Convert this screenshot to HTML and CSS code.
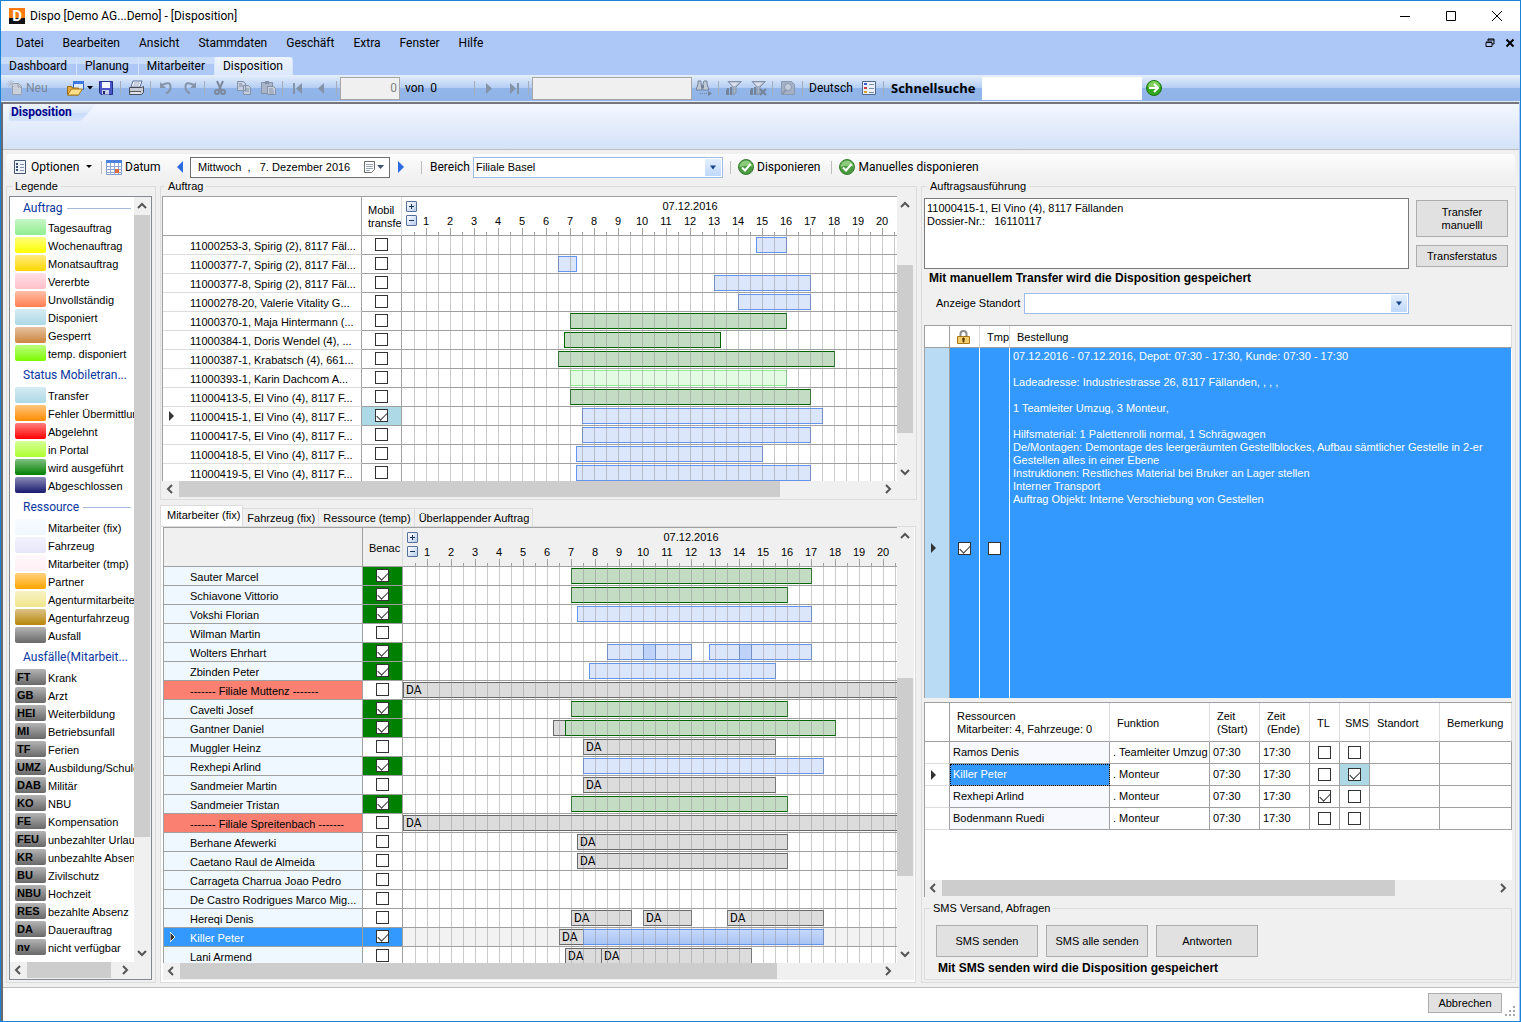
FILE: index.html
```html
<!DOCTYPE html>
<html lang="de">

<head>
    <meta charset="UTF-8">
    <meta name="viewport" content="width=device-width, initial-scale=1.0">
    <title>Dispo [Demo AG...Demo] - [Disposition]</title>
    <link rel="stylesheet" href="styles.css">
</head>

<body>
    <svg class="sprite" aria-hidden="true">
        <symbol id="arrow-up" viewBox="0 0 16 16"><path d="M4 10l4-4 4 4" fill="none" stroke="#555" stroke-width="2" /></symbol>
        <symbol id="arrow-down" viewBox="0 0 16 16"><path d="M4 6l4 4 4-4" fill="none" stroke="#555" stroke-width="2" /></symbol>
        <symbol id="arrow-left" viewBox="0 0 16 16"><path d="M10 4L6 8l4 4" fill="none" stroke="#555" stroke-width="2" /></symbol>
        <symbol id="arrow-right" viewBox="0 0 16 16"><path d="M6 4l4 4-4 4" fill="none" stroke="#555" stroke-width="2" /></symbol>
        <symbol id="ok" viewBox="0 0 16 16">
            <circle cx="8" cy="8" r="7.5" fill="#4a9c3f" stroke="#3a7d33" />
            <path d="M1.500 8a6.500 6.500 0 0 1 13 0c-4-2-9-1-13 0z" fill="#8ccb7c" />
            <path d="M4 8.500l3 3 5.500-6.500" fill="none" stroke="#fff" stroke-width="2" />
        </symbol>
        <symbol id="marker" viewBox="0 0 6 10"><path d="M0 0l5 5-5 5z" fill="#333" /></symbol>
        <symbol id="combo" viewBox="0 0 16 16"><path d="M5 6h6L8 10z" fill="#15428b" /></symbol>
    </svg>

    <div class="window">
        <header class="titlebar">
            <span class="logo">D</span>
            <h1>Dispo [Demo AG...Demo] - [Disposition]</h1>
            <div class="window-buttons">
                <button type="button" aria-label="Minimieren"><svg width="12" height="12"><path d="M1 6.500h10" stroke="#000" /></svg></button>
                <button type="button" aria-label="Maximieren"><svg width="12" height="12"><path d="M1.500 1.500h9v9h-9z" fill="none" stroke="#000" /></svg></button>
                <button type="button" aria-label="Schliessen"><svg width="12" height="12"><path d="M1 1l10 10M11 1L1 11" stroke="#000" /></svg></button>
            </div>
        </header>

        <nav class="menubar">
            <a href="#">Datei</a>
            <a href="#">Bearbeiten</a>
            <a href="#">Ansicht</a>
            <a href="#">Stammdaten</a>
            <a href="#">Geschäft</a>
            <a href="#">Extra</a>
            <a href="#">Fenster</a>
            <a href="#">Hilfe</a>
            <div class="mdi-buttons">
                <button type="button" aria-label="Wiederherstellen"><svg width="10" height="10"><path d="M3 3V1h6v5H7M3 2h6M1 4.500h6v4H1zM1 4h6" fill="none" stroke="#000" /></svg></button>
                <button type="button" aria-label="Fenster schliessen"><svg width="10" height="10"><path d="M1.500 1.500l7 7M8.500 1.500l-7 7" stroke="#000" stroke-width="2" /></svg></button>
            </div>
        </nav>

        <nav class="module-tabs">
            <a href="#">Dashboard</a>
            <a href="#">Planung</a>
            <a href="#">Mitarbeiter</a>
            <a href="#" class="active">Disposition</a>
        </nav>

        <div class="toolbar">
            <button type="button" class="tool-new" disabled>
                <svg width="16" height="16"><path d="M5.500 3.500h6l3 3v8h-9z" fill="#c9d0da" stroke="#97a1b0" /><path d="M11 3v4h4" fill="none" stroke="#97a1b0" /><path d="M4 0v8M0 4h8M1 1l6 6M7 1L1 7" stroke="#b4bdca" /></svg>
                Neu
            </button>
            <button type="button" class="tool-open" aria-label="Öffnen">
                <svg width="17" height="16"><path d="M6.500 1.500h10v8h-10z" fill="#dfeaff" stroke="#2b5fc4" /><path d="M6 1h11v3H6z" fill="#3f78e0" /><path d="M.500 15V6.500h4l1 1.500h6v7z" fill="#e3a93c" stroke="#9a6a14" /><path d="M.500 15l4-6h11l-4 6z" fill="#ffdf87" stroke="#a87a1c" /></svg>
                <svg width="7" height="4"><path d="M1 0h6L4 3.500z" /></svg>
            </button>
            <button type="button" class="tool" aria-label="Speichern">
                <svg width="16" height="16"><path d="M1.500 1.500h13v13H3l-1.500-2z" fill="#4a55c8" stroke="#252c86" /><path d="M4 2h8v6H4z" fill="#f4f6ff" /><path d="M4 10h7v4.500H4z" fill="#c9cfe8" /><path d="M5 11h2v3H5z" fill="#20266e" /></svg>
            </button>
            <span class="sep"></span>
            <button type="button" class="tool" aria-label="Drucken">
                <svg width="16" height="16"><path d="M5 1h9l-2 6H3z" fill="#fff" stroke="#5a6f96" /><path d="M6 3h6M5 5h6" stroke="#8fa3c4" /><path d="M1.500 7.500h12l2-1v6l-2 2h-12z" fill="#c6cbd4" stroke="#4a4f5b" /><path d="M2 11.500h11" stroke="#555" /><path d="M3 13h9" stroke="#fff" /></svg>
            </button>
            <span class="sep"></span>
            <button type="button" class="tool" aria-label="Rückgängig" disabled>
                <svg width="16" height="16"><path d="M4 5q8-4 8.500 1T8 13.500" fill="none" stroke="#8795ab" stroke-width="2" /><path d="M2 2v6h6z" fill="#8795ab" /></svg>
            </button>
            <button type="button" class="tool" aria-label="Wiederholen" disabled>
                <svg width="16" height="16"><path d="M12 5Q4 1 3.500 6T8 13.500" fill="none" stroke="#8795ab" stroke-width="2" /><path d="M14 2v6H8z" fill="#8795ab" /></svg>
            </button>
            <span class="sep"></span>
            <button type="button" class="tool" aria-label="Ausschneiden" disabled>
                <svg width="16" height="16"><path d="M5 1l4 9M11 1l-4 9" stroke="#7c899d" stroke-width="2" /><circle cx="5" cy="12" r="2" fill="none" stroke="#7c899d" stroke-width="2" /><circle cx="11" cy="12" r="2" fill="none" stroke="#7c899d" stroke-width="2" /></svg>
            </button>
            <button type="button" class="tool" aria-label="Kopieren" disabled>
                <svg width="16" height="16"><path d="M1.500 1.500h6l2 2v7h-8zM7.500 5.500h5l2 2v7h-7z" fill="#c5cede" stroke="#8491a6" /><path d="M3 4h3M3 6h4M9 9h4M9 11h4" stroke="#8491a6" /></svg>
            </button>
            <button type="button" class="tool" aria-label="Einfügen" disabled>
                <svg width="16" height="16"><path d="M1.500 2.500h11v11h-11z" fill="#a9b5c8" stroke="#8491a6" /><path d="M5 1h4v3H5z" fill="#8491a6" /><path d="M7.500 6.500h6l2 2v6h-8z" fill="#c9d2e0" stroke="#8491a6" /><path d="M9 9h4M9 11h5M9 13h5" stroke="#8491a6" /></svg>
            </button>
            <span class="sep"></span>
            <button type="button" class="tool" aria-label="Erster Datensatz" disabled>
                <svg width="14" height="14"><path d="M2 2h2v11H2zM11 2v11L5 7.500z" fill="#8593a8" /></svg>
            </button>
            <button type="button" class="tool" aria-label="Vorheriger Datensatz" disabled>
                <svg width="14" height="14"><path d="M9 2v11L3 7.500z" fill="#8593a8" /></svg>
            </button>
            <span class="sep"></span>
            <input type="text" class="record-input" value="0" aria-label="Datensatz" disabled>
            <span class="record-count">von&nbsp; 0</span>
            <span class="sep"></span>
            <button type="button" class="tool" aria-label="Nächster Datensatz" disabled>
                <svg width="14" height="14"><path d="M3 2v11l6-5.500z" fill="#8593a8" /></svg>
            </button>
            <button type="button" class="tool" aria-label="Letzter Datensatz" disabled>
                <svg width="14" height="14"><path d="M10 2h2v11h-2zM3 2v11l6-5.500z" fill="#8593a8" /></svg>
            </button>
            <span class="sep"></span>
            <input type="text" class="find-input" aria-label="Suchbegriff" disabled>
            <button type="button" class="tool" aria-label="Suchen" disabled>
                <svg width="16" height="16"><path d="M2 1h3v3l1 6H0l2-6zM8 1h3v3l2 6H7V4z" fill="#bfc9d8" stroke="#75839a" /><path d="M5 5h3v3H5z" fill="#75839a" /><path d="M4 13.500h8" stroke="#75839a" stroke-dasharray="1 1" /><path d="M12 11v5l4-2.500z" fill="#75839a" /></svg>
            </button>
            <span class="sep"></span>
            <button type="button" class="tool" aria-label="Filter" disabled>
                <svg width="16" height="16"><path d="M2 1.500h13.500L10 7v6l-3 2V7z" fill="#a9b4c6" stroke="#8491a6" /><path d="M4 2.500h9L9 6H7z" fill="#d9e0ea" /><path d="M1 8h2v7H0v-4zM4 7h2v8H4z" fill="#75839a" /></svg>
            </button>
            <button type="button" class="tool" aria-label="Filter löschen" disabled>
                <svg width="17" height="16"><path d="M2 1.500h13.500L10 7v6l-3 2V7z" fill="#a9b4c6" stroke="#8491a6" /><path d="M4 2.500h9L9 6H7z" fill="#d9e0ea" /><path d="M1 8h2v7H0v-4zM4 7h2v8H4z" fill="#75839a" /><path d="M10 9l6 6M16 9l-6 6" stroke="#75839a" stroke-width="2" /></svg>
            </button>
            <span class="sep"></span>
            <button type="button" class="tool" aria-label="Vorschau" disabled>
                <svg width="16" height="16"><path d="M1.500 1.500h10l3 3v10h-13z" fill="#a3b0c5" stroke="#8c99ae" /><circle cx="8" cy="7" r="3.500" fill="#c3cedd" stroke="#8c99ae" /><path d="M6 10l-4 4" stroke="#8c99ae" stroke-width="2" /></svg>
            </button>
            <span class="sep"></span>
            <button type="button" class="tool-language">Deutsch</button>
            <button type="button" class="tool" aria-label="Liste">
                <svg width="16" height="16"><path d="M1.500 1.500h13v13h-13z" fill="#eaf1fc" stroke="#53678c" /><path d="M3 3h3v2H3z" fill="#3f5bd0" /><path d="M3 7h3v2H3z" fill="#d03f3f" /><path d="M3 11h3v2H3z" fill="#d9a32b" /><path d="M8 4.500h5M8 8.500h5M8 12.500h5" stroke="#7d8ca8" /></svg>
            </button>
            <span class="sep"></span>
            <label class="quick-label" for="quick">Schnellsuche</label>
            <input type="text" id="quick" class="quick-input">
            <button type="button" class="tool" aria-label="Schnellsuche starten">
                <svg width="16" height="16"><circle cx="8" cy="8" r="7.500" fill="#35a81f" stroke="#1c7412" /><path d="M2 7a6 6 0 0 1 12 0z" fill="#7fcf5c" /><path d="M3 8h8M8 4l4 4-4 4" fill="none" stroke="#fff" stroke-width="2" /></svg>
            </button>
        </div>

        <div class="client">
            <div class="band">
                <h2>Disposition</h2>
                <svg width="16" height="17" viewBox="0 0 16 17"><defs><linearGradient id="corner" x1="0" y1="0" x2="0" y2="1"><stop offset="0" stop-color="#eef4fe" /><stop offset="0.500" stop-color="#d9e6fb" /><stop offset="0.500" stop-color="#c9dcfa" /><stop offset="1" stop-color="#d5e4fc" /></linearGradient></defs><path d="M0 0h16L2 16l-2 1z" fill="url(#corner)" /></svg>
            </div>

            <div class="options-bar">
                <button type="button" class="opt-options">
                    <svg width="12" height="14"><path d="M.500.500h11v13H.500z" fill="#eef2fa" stroke="#46546f" /><path d="M2 3h2v2H2zM2 6h2v2H2zM2 9h2v2H2z" fill="#3e4f74" /><path d="M6 4.500h4M6 7.500h4M6 10.500h4" stroke="#8592ab" /></svg>
                    <span>Optionen</span>
                    <svg width="7" height="4"><path d="M0 0h6L3 3z" /></svg>
                </button>
                <span class="sep-gray"></span>
                <button type="button" class="opt-date">
                    <svg width="16" height="16"><path d="M.500 2.500h15v13H.500z" fill="#fff" stroke="#7d9bd0" /><path d="M0 1h16v3H0z" fill="#4b82dc" /><path d="M0 7.500h16M0 10.500h16M0 13.500h16M4.500 4v12M8.500 4v12M12.500 4v12" stroke="#8fa8d6" /><path d="M9 10h4v4H9z" fill="#e06a3a" /></svg>
                    Datum
                </button>
                <button type="button" class="step" aria-label="Vorheriger Tag"><svg width="7" height="12"><path d="M6 0v12L0 6z" fill="#2f6be0" /></svg></button>
                <div class="date-box">
                    <input type="text" value="Mittwoch  ,   7. Dezember 2016" aria-label="Datum">
                    <svg width="22" height="14"><path d="M1.500 1.500h10v8l-3 3h-7z" fill="#fff" stroke="#6b6b6b" /><path d="M3 4.500h7M3 6.500h7M3 8.500h7M3 10.500h4" stroke="#9aa5b8" /><path d="M14 5h7l-3.500 4z" fill="#44546f" /></svg>
                </div>
                <button type="button" class="step" aria-label="Nächster Tag"><svg width="7" height="12"><path d="M1 0v12l6-6z" fill="#2f6be0" /></svg></button>
                <span class="sep-gray"></span>
                <label for="bereich" class="bereich-label">Bereich</label>
                <div class="combo combo-bereich">
                    <select id="bereich">
                        <option>Filiale Basel</option>
                    </select>
                    <svg width="16" height="16"><use href="#combo" /></svg>
                </div>
                <span class="sep-gray"></span>
                <button type="button" class="opt-action"><svg width="16" height="16"><use href="#ok" /></svg>Disponieren</button>
                <span class="sep-gray"></span>
                <button type="button" class="opt-action"><svg width="16" height="16"><use href="#ok" /></svg>Manuelles disponieren</button>
            </div>

            <main class="columns">
                <fieldset class="group">
                    <legend>Legende</legend>
                    <div class="legend-box">
                        <div class="legend-list">
                            <h3>Auftrag</h3>
                            <ul>
                                <li><i class="lightgreen"></i>Tagesauftrag</li>
                                <li><i class="yellow"></i>Wochenauftrag</li>
                                <li><i class="gold"></i>Monatsauftrag</li>
                                <li><i class="pink"></i>Vererbte</li>
                                <li><i class="coral"></i>Unvollständig</li>
                                <li><i class="lightblue"></i>Disponiert</li>
                                <li><i class="peru"></i>Gesperrt</li>
                                <li><i class="lawngreen"></i>temp. disponiert</li>
                            </ul>
                            <h3>Status Mobiletran...</h3>
                            <ul>
                                <li><i class="lightblue"></i>Transfer</li>
                                <li><i class="darkorange"></i>Fehler Übermittlun</li>
                                <li><i class="red"></i>Abgelehnt</li>
                                <li><i class="greenyellow"></i>in Portal</li>
                                <li><i class="green"></i>wird ausgeführt</li>
                                <li><i class="midnight"></i>Abgeschlossen</li>
                            </ul>
                            <h3>Ressource</h3>
                            <ul>
                                <li><i class="aliceblue"></i>Mitarbeiter (fix)</li>
                                <li><i class="lavender"></i>Fahrzeug</li>
                                <li><i class="blush"></i>Mitarbeiter (tmp)</li>
                                <li><i class="orange"></i>Partner</li>
                                <li><i class="khaki"></i>Agenturmitarbeiter</li>
                                <li><i class="goldenrod"></i>Agenturfahrzeug</li>
                                <li><i class="gray"></i>Ausfall</li>
                            </ul>
                            <h3>Ausfälle(Mitarbeit...</h3>
                            <ul>
                                <li><i class="gray">FT</i>Krank</li>
                                <li><i class="gray">GB</i>Arzt</li>
                                <li><i class="gray">HEI</i>Weiterbildung</li>
                                <li><i class="gray">MI</i>Betriebsunfall</li>
                                <li><i class="gray">TF</i>Ferien</li>
                                <li><i class="gray">UMZ</i>Ausbildung/Schule</li>
                                <li><i class="gray">DAB</i>Militär</li>
                                <li><i class="gray">KO</i>NBU</li>
                                <li><i class="gray">FE</i>Kompensation</li>
                                <li><i class="gray">FEU</i>unbezahlter Urlaub</li>
                                <li><i class="gray">KR</i>unbezahlte Absen</li>
                                <li><i class="gray">BU</i>Zivilschutz</li>
                                <li><i class="gray">NBU</i>Hochzeit</li>
                                <li><i class="gray">RES</i>bezahlte Absenz</li>
                                <li><i class="gray">DA</i>Dauerauftrag</li>
                                <li><i class="gray">nv</i>nicht verfügbar</li>
                            </ul>
                        </div>
                        <div class="scroll-v">
                            <button type="button" aria-label="Nach oben"><svg><use href="#arrow-up" /></svg></button>
                            <div class="track" style="grid-template-rows: 0fr 625fr 107fr"><span class="thumb"></span></div>
                            <button type="button" aria-label="Nach unten"><svg><use href="#arrow-down" /></svg></button>
                        </div>
                        <div class="scroll-h">
                            <button type="button" aria-label="Nach links"><svg><use href="#arrow-left" /></svg></button>
                            <div class="track" style="grid-template-columns: 0fr 83fr 6fr"><span class="thumb"></span></div>
                            <button type="button" aria-label="Nach rechts"><svg><use href="#arrow-right" /></svg></button>
                        </div>
                    </div>
                </fieldset>

                <div class="planning">
                    <fieldset class="group orders">
                        <legend>Auftrag</legend>
                        <div class="gantt">
                            <div class="gantt-view">
                                <table>
                                    <colgroup><col class="col-name"><col class="col-check"><col></colgroup>
                                    <thead>
                                        <tr>
                                            <th></th>
                                            <th>Mobil<br>transfe</th>
                                            <th class="scale"></th>
                                        </tr>
                                    </thead>
                                    <tbody id="orderRows"></tbody>
                                </table>
                            </div>
                            <div class="scroll-v">
                                <button type="button" aria-label="Nach oben"><svg><use href="#arrow-up" /></svg></button>
                                <div class="track" style="grid-template-rows: 51fr 169fr 30fr"><span class="thumb"></span></div>
                                <button type="button" aria-label="Nach unten"><svg><use href="#arrow-down" /></svg></button>
                            </div>
                            <div class="scroll-h">
                                <button type="button" aria-label="Nach links"><svg><use href="#arrow-left" /></svg></button>
                                <div class="track" style="grid-template-columns: 0fr 601fr 100fr"><span class="thumb"></span></div>
                                <button type="button" aria-label="Nach rechts"><svg><use href="#arrow-right" /></svg></button>
                            </div>
                        </div>
                    </fieldset>

                    <nav class="resource-tabs">
                        <a href="#" class="active">Mitarbeiter (fix)</a>
                        <a href="#">Fahrzeug (fix)</a>
                        <a href="#">Ressource (temp)</a>
                        <a href="#">Überlappender Auftrag</a>
                    </nav>
                    <div class="resources">
                        <div class="gantt">
                            <div class="gantt-view">
                                <table>
                                    <colgroup><col class="col-name"><col class="col-check"><col></colgroup>
                                    <thead>
                                        <tr>
                                            <th></th>
                                            <th>Benac</th>
                                            <th class="scale"></th>
                                        </tr>
                                    </thead>
                                    <tbody id="staffRows"></tbody>
                                </table>
                            </div>
                            <div class="scroll-v">
                                <button type="button" aria-label="Nach oben"><svg><use href="#arrow-up" /></svg></button>
                                <div class="track" style="grid-template-rows: 134fr 199fr 69fr"><span class="thumb"></span></div>
                                <button type="button" aria-label="Nach unten"><svg><use href="#arrow-down" /></svg></button>
                            </div>
                            <div class="scroll-h">
                                <button type="button" aria-label="Nach links"><svg><use href="#arrow-left" /></svg></button>
                                <div class="track" style="grid-template-columns: 0fr 597fr 103fr"><span class="thumb"></span></div>
                                <button type="button" aria-label="Nach rechts"><svg><use href="#arrow-right" /></svg></button>
                            </div>
                        </div>
                    </div>
                </div>

                <fieldset class="group execution">
                    <legend>Auftragsausführung</legend>
                    <div class="transfer">
                        <textarea aria-label="Auftrag">11000415-1, El Vino (4), 8117 Fällanden
Dossier-Nr.:   16110117</textarea>
                        <div class="transfer-buttons">
                            <button type="button" class="btn">Transfer<br>manuelll</button>
                            <button type="button" class="btn">Transferstatus</button>
                        </div>
                    </div>
                    <p class="note">Mit manuellem Transfer wird die Disposition gespeichert</p>
                    <div class="location">
                        <label for="standort">Anzeige Standort</label>
                        <div class="combo combo-standort">
                            <select id="standort">
                                <option></option>
                            </select>
                            <svg width="16" height="16"><use href="#combo" /></svg>
                        </div>
                    </div>

                    <div class="order-view">
                        <table>
                            <colgroup><col class="w-head"><col class="w-check"><col class="w-check"><col></colgroup>
                            <thead>
                                <tr>
                                    <th></th>
                                    <th><svg width="13" height="14"><path d="M3.500 7V4a3 3 0 0 1 6 0v3" fill="none" stroke="#8c8c8c" stroke-width="2" /><path d="M.500 6.500h12v7H.500z" fill="#f3cd6b" stroke="#a8761a" /><path d="M6 8h1v4H6zM5 9h3" fill="#5b3c05" stroke="#5b3c05" /></svg></th>
                                    <th>Tmp</th>
                                    <th>Bestellung</th>
                                </tr>
                            </thead>
                            <tbody>
                                <tr>
                                    <td><svg class="marker" width="6" height="10"><use href="#marker" /></svg></td>
                                    <td><input type="checkbox" aria-label="Gesperrt" checked></td>
                                    <td><input type="checkbox" aria-label="Tmp"></td>
                                    <td>07.12.2016 - 07.12.2016, Depot: 07:30 - 17:30, Kunde: 07:30 - 17:30<br><br>
                                        Ladeadresse: Industriestrasse 26, 8117 Fällanden, , , ,<br><br>
                                        1 Teamleiter Umzug, 3 Monteur,<br><br>
                                        Hilfsmaterial: 1 Palettenrolli normal, 1 Schrägwagen<br>
                                        De/Montagen: Demontage des leergeräumten Gestellblockes, Aufbau sämtlicher Gestelle in 2-er Gestellen alles in einer Ebene<br>
                                        Instruktionen: Restliches Material bei Bruker an Lager stellen<br>
                                        Interner Transport<br>
                                        Auftrag Objekt: Interne Verschiebung von Gestellen</td>
                                </tr>
                            </tbody>
                        </table>
                    </div>

                    <div class="assigned-view">
                        <table>
                            <colgroup><col class="w-head"><col class="w-name"><col class="w-function"><col class="w-time"><col class="w-time"><col class="w-check"><col class="w-check"><col class="w-place"><col></colgroup>
                            <thead>
                                <tr>
                                    <th></th>
                                    <th>Ressourcen<br>Mitarbeiter: 4, Fahrzeuge: 0</th>
                                    <th>Funktion</th>
                                    <th>Zeit<br>(Start)</th>
                                    <th>Zeit<br>(Ende)</th>
                                    <th>TL</th>
                                    <th>SMS</th>
                                    <th>Standort</th>
                                    <th>Bemerkung</th>
                                </tr>
                            </thead>
                            <tbody>
                                <tr>
                                    <td></td>
                                    <td>Ramos Denis</td>
                                    <td>. Teamleiter Umzug</td>
                                    <td>07:30</td>
                                    <td>17:30</td>
                                    <td><input type="checkbox" aria-label="TL Ramos Denis"></td>
                                    <td><input type="checkbox" aria-label="SMS Ramos Denis"></td>
                                    <td></td>
                                    <td></td>
                                </tr>
                                <tr class="selected">
                                    <td><svg class="marker" width="6" height="10"><use href="#marker" /></svg></td>
                                    <td>Killer Peter</td>
                                    <td>. Monteur</td>
                                    <td>07:30</td>
                                    <td>17:30</td>
                                    <td><input type="checkbox" aria-label="TL Killer Peter"></td>
                                    <td class="sent"><input type="checkbox" aria-label="SMS Killer Peter" checked></td>
                                    <td></td>
                                    <td></td>
                                </tr>
                                <tr>
                                    <td></td>
                                    <td>Rexhepi Arlind</td>
                                    <td>. Monteur</td>
                                    <td>07:30</td>
                                    <td>17:30</td>
                                    <td><input type="checkbox" aria-label="TL Rexhepi Arlind" checked></td>
                                    <td><input type="checkbox" aria-label="SMS Rexhepi Arlind"></td>
                                    <td></td>
                                    <td></td>
                                </tr>
                                <tr>
                                    <td></td>
                                    <td>Bodenmann Ruedi</td>
                                    <td>. Monteur</td>
                                    <td>07:30</td>
                                    <td>17:30</td>
                                    <td><input type="checkbox" aria-label="TL Bodenmann Ruedi"></td>
                                    <td><input type="checkbox" aria-label="SMS Bodenmann Ruedi"></td>
                                    <td></td>
                                    <td></td>
                                </tr>
                            </tbody>
                        </table>
                        <div class="scroll-h">
                            <button type="button" aria-label="Nach links"><svg><use href="#arrow-left" /></svg></button>
                            <div class="track" style="grid-template-columns: 0fr 454fr 100fr"><span class="thumb"></span></div>
                            <button type="button" aria-label="Nach rechts"><svg><use href="#arrow-right" /></svg></button>
                        </div>
                    </div>

                    <fieldset class="group sms">
                        <legend>SMS Versand, Abfragen</legend>
                        <div class="sms-buttons">
                            <button type="button" class="btn">SMS senden</button>
                            <button type="button" class="btn">SMS alle senden</button>
                            <button type="button" class="btn">Antworten</button>
                        </div>
                        <p class="note">Mit SMS senden wird die Disposition gespeichert</p>
                    </fieldset>
                </fieldset>
            </main>

            <footer class="footer">
                <button type="button" class="btn">Abbrechen</button>
                <svg width="11" height="11"><path d="M8 0h2v2H8zM8 4h2v2H8zM4 4h2v2H4zM8 8h2v2H8zM4 8h2v2H4zM0 8h2v2H0z" fill="#a8a8a8" /></svg>
            </footer>
        </div>
    </div>

    <script src="script.js"></script>
</body>

</html>
```

FILE: styles.css
```css
* {
    box-sizing: border-box;
}

body {
    margin: 0;
    font-family: "Liberation Sans", Arial, sans-serif;
    font-size: 11px;
    line-height: 13px;
    color: #000;
}

button,
input,
select,
textarea {
    font: inherit;
    color: inherit;
    margin: 0;
}

button {
    padding: 0;
    border: none;
    background: none;
    white-space: nowrap;
}

a {
    color: inherit;
    text-decoration: none;
}

h1,
h2,
h3,
p,
ul {
    margin: 0;
    padding: 0;
    font-weight: normal;
    font-size: inherit;
}

table {
    width: 100%;
    table-layout: fixed;
    border-collapse: separate;
    border-spacing: 0;
}

th {
    font-weight: normal;
    text-align: left;
}

svg {
    flex: none;
}

.sprite {
    position: absolute;
    width: 0;
    height: 0;
}

.window {
    display: flex;
    flex-direction: column;
    height: 100vh;
    border: 1px solid #1883d7;
    background-color: #adc8f7;
    overflow: hidden;
}

/* Title, menu, module tabs */
.titlebar,
.menubar,
.module-tabs,
.toolbar,
.options-bar {
    font-family: Roboto, "Noto Sans", sans-serif;
    font-size: 12px;
    line-height: 16px;
}

.titlebar {
    display: flex;
    align-items: center;
    flex: none;
    height: 30px;
    padding-left: 8px;
    gap: 5px;
    background-color: #fff;
}

.logo {
    width: 16px;
    height: 16px;
    background: linear-gradient(#f97b0c 60%, #111 60%);
    color: #fff;
    font-weight: bold;
    font-size: 15px;
    text-align: center;
}

.window-buttons {
    display: flex;
    margin-left: auto;
}

.window-buttons button {
    display: flex;
    justify-content: center;
    width: 46px;
}

.menubar {
    display: flex;
    align-items: center;
    flex: none;
    height: 26px;
    padding: 0 5px 2px 15px;
    gap: 19px;
}

.mdi-buttons {
    display: flex;
    gap: 10px;
    margin-left: auto;
}

.mdi-buttons button {
    display: flex;
}

.module-tabs {
    display: flex;
    flex: none;
    height: 18px;
    line-height: 18px;
}

.module-tabs a {
    padding: 0 9px 0 8px;
    border-right: 1px solid #d6e4fb;
    background: linear-gradient(#c9dcfa 40%, #adc8f7 40%);
}

.module-tabs a.active {
    border-radius: 0 3px 0 0;
    background: linear-gradient(#eef4fe, #dce8fc);
}

/* Main toolbar */
.toolbar {
    display: flex;
    align-items: center;
    flex: none;
    height: 27px;
    padding-left: 1px;
    border-bottom: 1px solid #e3ebf8;
    background: linear-gradient(#e6effc, #b4cdf3 50%, #93b6ea 50%, #90b3e8);
}

.tool {
    display: flex;
    align-items: center;
    justify-content: center;
    width: 24px;
    height: 22px;
}

.tool-new {
    display: flex;
    align-items: center;
    width: 62px;
    padding-left: 5px;
    gap: 3px;
    color: #7b8799;
}

.tool-open {
    display: flex;
    align-items: center;
    width: 30px;
    padding-left: 3px;
    gap: 2px;
}

.sep {
    flex: none;
    width: 6px;
    height: 14px;
    background: linear-gradient(#a4acba, #a4acba) 2px 0 / 1px 100% no-repeat;
}

.record-input,
.find-input {
    width: 60px;
    height: 23px;
    padding: 0 2px;
    border: 1px solid #a6a6a6;
    border-radius: 0;
    background-color: #f0f0f0;
    color: #838383;
    text-align: right;
}

.find-input {
    width: 160px;
}

.record-count {
    width: 72px;
    padding-left: 5px;
}

.tool-language {
    width: 51px;
    padding-left: 3px;
    text-align: left;
}

.quick-label {
    width: 95px;
    padding-left: 4px;
    font-family: "Open Sans", "Noto Sans", sans-serif;
    font-size: 13px;
    font-weight: bold;
}

.quick-input {
    width: 160px;
    height: 23px;
    border: none;
    background-color: #fff;
}

/* Client area */
.client {
    display: flex;
    flex-direction: column;
    flex: 1;
    min-height: 0;
    margin-right: 1px;
    border-left: 2px solid #6a6a72;
    border-top: 2px solid #75757d;
    background-color: #f0f0f0;
}

.band {
    display: flex;
    flex: none;
    height: 46px;
    padding-left: 6px;
    border-bottom: 1px solid #bdbdbd;
    background: linear-gradient(#f3f7ff, #d4e2f8);
}

.band h2 {
    width: 71px;
    height: 17px;
    padding-left: 2px;
    background: linear-gradient(#eef4fe, #d9e6fb 50%, #c9dcfa 50%, #d5e4fc);
    color: #00008b;
    font-family: Roboto, "Noto Sans", sans-serif;
    font-size: 12px;
    line-height: 17px;
    font-weight: bold;
}

.options-bar {
    display: flex;
    align-items: center;
    flex: none;
    height: 26px;
    margin: 4px 4px 0 3px;
    padding-left: 8px;
    border-radius: 4px;
    background: linear-gradient(#fdfdfd, #f0f0f0);
}

.options-bar button {
    display: flex;
    align-items: center;
}

.opt-options {
    width: 84px;
    gap: 5px;
}

.opt-options span {
    width: 50px;
    text-align: left;
}

.opt-date {
    width: 64px;
    gap: 3px;
}

.sep-gray {
    flex: none;
    width: 8px;
    height: 13px;
    background: linear-gradient(#bdbdbd, #bdbdbd) 3px 0 / 1px 100% no-repeat;
}

.options-bar .step {
    justify-content: center;
    width: 20px;
}

.date-box {
    display: flex;
    align-items: center;
    width: 200px;
    height: 21px;
    padding: 0 4px 0 7px;
    border: 1px solid #6e6e6e;
    background-color: #fff;
}

.date-box input {
    flex: 1;
    min-width: 0;
    padding: 0;
    border: none;
    font-family: "Liberation Sans", Arial, sans-serif;
    font-size: 11px;
    white-space: pre;
}

.bereich-label {
    width: 47px;
    padding-left: 4px;
}

.options-bar .step + .sep-gray {
    margin-left: 8px;
}

.combo {
    display: flex;
    position: relative;
    height: 21px;
    font-family: "Liberation Sans", Arial, sans-serif;
    font-size: 11px;
}

.combo select {
    flex: 1;
    min-width: 0;
    padding: 0 20px 0 2px;
    border: 1px solid #9dbde8;
    border-radius: 0;
    background-color: #fff;
    appearance: none;
}

.combo svg {
    position: absolute;
    top: 2px;
    right: 2px;
    height: 17px;
    background: linear-gradient(#e3eefe, #bfd9fb);
    pointer-events: none;
}

.combo-bereich {
    width: 250px;
    margin-right: 4px;
}

.options-bar .opt-action {
    gap: 3px;
    margin: 0 8px 0 3px;
}

/* Group boxes */
.columns {
    display: grid;
    grid-template-columns: 150px minmax(0, 1fr) 595px;
    gap: 4px;
    flex: 1;
    min-height: 0;
    padding: 0 3px 4px 3px;
}

.group {
    display: flex;
    flex-direction: column;
    min-width: 0;
    min-height: 0;
    margin: 0;
    padding: 3px 3px 2px 2px;
    border: 1px solid #dcdcdc;
}

.group > legend {
    margin-left: 3px;
    padding: 0 3px;
}

/* Scroll bars */
.scroll-v,
.scroll-h {
    display: flex;
    min-width: 0;
    min-height: 0;
    background-color: #f0f0f0;
}

.scroll-v {
    flex-direction: column;
    width: 17px;
    padding-right: 1px;
}

.scroll-h {
    height: 17px;
    padding-bottom: 1px;
}

.scroll-v button,
.scroll-h button {
    flex: none;
    width: 16px;
    height: 18px;
}

.scroll-h button {
    width: 17px;
    height: 16px;
}

.scroll-v button svg,
.scroll-h button svg {
    display: block;
    width: 16px;
    height: 16px;
}

.track {
    display: grid;
    flex: 1;
}

.scroll-v .thumb {
    grid-row: 2;
    background-color: #cdcdcd;
}

.scroll-h .thumb {
    grid-column: 2;
    background-color: #cdcdcd;
}

/* Legend */
.legend-box {
    display: grid;
    grid-template-columns: minmax(0, 1fr) 17px;
    grid-template-rows: minmax(0, 1fr) 17px;
    flex: 1;
    min-height: 0;
    border: 1px solid #828790;
    background-color: #fff;
}

.legend-box .scroll-h {
    grid-column: 1 / 3;
    padding-right: 17px;
}

.legend-list {
    padding-left: 5px;
    overflow: hidden;
}

.legend-list h3 {
    display: flex;
    align-items: center;
    gap: 4px;
    height: 24px;
    padding: 0 3px 0 8px;
    color: #0a36a0;
    font-family: Roboto, "Noto Sans", sans-serif;
    font-size: 12px;
    line-height: 16px;
    white-space: nowrap;
}

.legend-list h3:first-child {
    height: 22px;
}

.legend-list h3::after {
    content: "";
    flex: 1;
    height: 1px;
    background-color: #a9b9dd;
}

.legend-list ul {
    list-style: none;
}

.legend-list li {
    display: flex;
    height: 18px;
    gap: 2px;
    line-height: 18px;
    white-space: nowrap;
}

.legend-list i {
    flex: none;
    width: 31px;
    height: 16px;
    padding-left: 2px;
    border-radius: 2px;
    background-image: linear-gradient(rgba(255, 255, 255, 0.5), rgba(255, 255, 255, 0));
    font-style: normal;
    font-weight: bold;
    line-height: 16px;
}

.lightgreen { background-color: #90ee90; }
.yellow { background-color: #ffff00; }
.gold { background-color: #ffd700; }
.pink { background-color: #ffc0cb; }
.coral { background-color: #ff7f50; }
.lightblue { background-color: #add8e6; }
.peru { background-color: #cd853f; }
.lawngreen { background-color: #7cfc00; }
.darkorange { background-color: #ff8c00; }
.red { background-color: #ff0000; }
.greenyellow { background-color: #adff2f; }
.green { background-color: #008000; }
.midnight { background-color: #191970; }
.aliceblue { background-color: #f0f8ff; }
.lavender { background-color: #e6e6fa; }
.blush { background-color: #fff0f5; }
.orange { background-color: #ffa500; }
.khaki { background-color: #f0e68c; }
.goldenrod { background-color: #b8860b; }
.gray { background-color: #696969; }

/* Gantt */
.planning {
    display: flex;
    flex-direction: column;
    min-height: 0;
}

.orders {
    flex: 0 0 320px;
    padding: 3px 2px 1px 1px;
}

.gantt {
    display: grid;
    grid-template-columns: minmax(0, 1fr) 17px;
    grid-template-rows: minmax(0, 1fr) 17px;
    flex: 1;
    min-height: 0;
}

.gantt .scroll-h {
    grid-column: 1 / 3;
    padding-right: 17px;
}

.gantt-view {
    border-top: 1px solid #a0a0a0;
    border-left: 1px solid #a0a0a0;
    background-color: #fff;
    overflow: hidden;
}

.col-name {
    width: 199px;
}

.col-check {
    width: 40px;
}

.gantt th {
    height: 39px;
    padding: 2px 0 0 6px;
    border-bottom: 1px solid #a0a0a0;
    border-right: 1px solid #a0a0a0;
    white-space: nowrap;
    overflow: hidden;
}

.gantt th:nth-child(2) {
    border-right-color: #dcdcdc;
}

.resources th {
    background-color: #f0f0f0;
}

.gantt th.scale {
    position: relative;
    padding: 0;
    border-right: none;
    vertical-align: top;
}

.day {
    width: 576px;
    text-align: center;
}

.day-date {
    height: 17px;
    line-height: 19px;
}

.hours {
    display: flex;
    padding-left: 12px;
    line-height: 14px;
}

.hours span {
    flex: 0 0 24px;
}

.ticks {
    height: 7px;
    margin-left: 12px;
    background:
        linear-gradient(to right, #a0a0a0 1px, transparent 1px) 0 4px / 12px 3px repeat-x,
        linear-gradient(to right, #a0a0a0 1px, transparent 1px) 12px 0 / 24px 7px repeat-x;
}

.zoom-buttons {
    position: absolute;
    top: 4px;
    left: 4px;
    display: flex;
    flex-direction: column;
    gap: 3px;
}

.zoom-buttons button {
    display: flex;
    width: 11px;
    height: 11px;
    border: 1px solid #56719c;
    border-radius: 1px;
    background: linear-gradient(135deg, #fff, #b9cdea);
}

.gantt td {
    height: 19px;
    padding: 0;
    border-bottom: 1px solid #a0a0a0;
}

.gantt td:first-child {
    position: relative;
    padding: 3px 0 0 27px;
    border-right: 1px solid #a0a0a0;
    border-bottom-color: #dcdcdc;
    line-height: 15px;
    white-space: nowrap;
}

.gantt td:nth-child(2) {
    border-right: 1px solid #a0a0a0;
    text-align: center;
}

.resources td:first-child {
    background-color: #f0f8ff;
}

.resources .gantt td:first-child {
    padding-left: 26px;
    border-bottom-color: #a0a0a0;
}

.resources .branch td:first-child {
    background-color: #fa8072;
}

.resources .notified td:nth-child(2) {
    background-color: #008000;
}

.resources .selected td:first-child,
.resources .selected td:nth-child(2) {
    background-color: #3399ff;
    color: #fff;
}

.resources .selected .timeline {
    background-color: #f2f2f2;
}

.orders .selected td:nth-child(2) {
    background-color: #add8e6;
}

.gantt .marker {
    position: absolute;
    top: 4px;
    left: 6px;
}

.resources .marker {
    stroke: #fff;
    overflow: visible;
}

.timeline {
    position: relative;
    overflow: hidden;
}

.timeline::after {
    content: "";
    position: absolute;
    inset: 0 0 0 12px;
    background: repeating-linear-gradient(to right, rgba(140, 140, 140, 0.45) 0 1px, transparent 1px 12px);
}

.bar {
    position: absolute;
    top: 1px;
    height: 16px;
    padding-left: 2px;
    border: 1px solid #6495ed;
    background-color: #dbe6fb;
    line-height: 14px;
    font-family: Roboto, "Noto Sans", sans-serif;
    font-size: 12px;
}

.bar-done {
    border-color: #006400;
    background-color: #c3dcc3;
}

.bar-day {
    border-color: #90ee90;
    background-color: #e3fbe3;
}

.bar-absence {
    border-color: #696969;
    background-color: #dcdcdc;
}

.bar-overlap {
    background-color: #bfd3f9;
}

.bar-active {
    background: linear-gradient(#c5d8fa, #a9c4f5);
}

input[type="checkbox"] {
    appearance: none;
    position: relative;
    display: inline-block;
    width: 13px;
    height: 13px;
    border: 1px solid #333;
    background-color: #fff;
    vertical-align: middle;
}

input[type="checkbox"]:checked::after {
    content: "";
    position: absolute;
    top: 2px;
    left: 1px;
    width: 9px;
    height: 5px;
    border-left: 1px solid #333;
    border-bottom: 1px solid #333;
    transform: rotate(-45deg);
}

.gantt td:nth-child(2) input {
    display: block;
    margin: 0 auto 2px;
}

/* Resource tabs */
.resource-tabs {
    display: flex;
    align-items: flex-end;
    flex: none;
    height: 26px;
}

.resource-tabs a {
    height: 18px;
    padding: 0 3px 0 4px;
    border: 1px solid #dcdcdc;
    border-left: none;
    border-bottom: none;
    line-height: 19px;
}

.resource-tabs a.active {
    height: 21px;
    padding: 0 2px 0 6px;
    border-left: 1px solid #dcdcdc;
    background-color: #fff;
}

.resources {
    display: flex;
    flex-direction: column;
    flex: 1;
    min-height: 0;
    margin-right: 1px;
    padding: 0 1px 2px 2px;
    border: 1px solid #dcdcdc;
    background-color: #fff;
}

/* Order execution */
.transfer {
    display: flex;
    flex: none;
    gap: 7px;
    padding: 2px 4px 0 0;
}

.transfer textarea {
    flex: 1;
    height: 71px;
    padding: 3px 2px;
    border: 1px solid #7a7a7a;
    resize: none;
}

.btn {
    height: 22px;
    border: 1px solid #adadad;
    background-color: #e1e1e1;
    text-align: center;
}

.transfer-buttons {
    display: flex;
    flex-direction: column;
    gap: 8px;
    width: 92px;
    padding-top: 2px;
}

.transfer-buttons .btn:first-child {
    height: 37px;
}

.note {
    padding: 3px 5px 0;
    font-size: 12px;
    font-weight: bold;
}

.location {
    display: flex;
    align-items: center;
    justify-content: space-between;
    flex: none;
    margin: 8px 103px 0 12px;
}

.combo-standort {
    width: 385px;
}

.order-view,
.assigned-view {
    border-top: 1px solid #a0a0a0;
    border-left: 1px solid #a0a0a0;
    background-color: #fff;
    overflow: hidden;
}

.order-view {
    flex: 1;
    min-height: 0;
    margin: 11px 0 4px;
}

.w-head { width: 25px; }
.w-check { width: 30px; }
.w-name { width: 160px; }
.w-function { width: 100px; }
.w-time { width: 50px; }
.w-place { width: 70px; }

.order-view th {
    height: 22px;
    padding: 1px 0 0 7px;
    border-right: 1px solid #dcdcdc;
    border-bottom: 1px solid #a0a0a0;
}

.order-view th:first-child {
    border-right-color: #a0a0a0;
}

.order-view th svg {
    display: block;
}

.order-view td {
    height: 400px;
    padding: 0;
    border-right: 1px solid #fff;
    background-color: #3399ff;
    color: #fff;
    text-align: center;
}

.order-view td:first-child {
    border-right-color: #a0a0a0;
    background-color: #b9dbf3;
}

.order-view td:last-child {
    padding: 2px 2px 0 3px;
    text-align: left;
    vertical-align: top;
}

.order-view .marker,
.assigned-view .marker {
    display: block;
    margin-left: 6px;
}

.assigned-view {
    display: flex;
    flex-direction: column;
    justify-content: space-between;
    flex: 0 0 195px;
}

.assigned-view th {
    height: 39px;
    padding: 2px 0 0 7px;
    border-right: 1px solid #dcdcdc;
    border-bottom: 1px solid #a0a0a0;
    white-space: nowrap;
}

.assigned-view th:nth-child(7) {
    padding-left: 5px;
}

.assigned-view th:first-child,
.assigned-view td:first-child {
    border-right-color: #a0a0a0;
}

.assigned-view td {
    height: 22px;
    padding: 0 0 0 3px;
    border-right: 1px solid #a0a0a0;
    border-bottom: 1px solid #a0a0a0;
    white-space: nowrap;
}

.assigned-view td:first-child {
    padding: 0;
    border-bottom-color: #dcdcdc;
}

.assigned-view td:nth-child(2) {
    background-color: #f8f8ff;
}

.assigned-view td:nth-child(6),
.assigned-view td:nth-child(7) {
    padding: 0;
    text-align: center;
}

.assigned-view .selected td:nth-child(2) {
    background-color: #3399ff;
    color: #fff;
    outline: 1px dotted #000;
    outline-offset: -1px;
}

.assigned-view .selected .sent {
    background-color: #add8e6;
}

.sms {
    flex: none;
    margin-top: 5px;
    padding: 10px 11px 4px;
}

.sms > legend {
    margin-left: -6px;
}

.sms-buttons {
    display: flex;
    gap: 8px;
}

.sms-buttons .btn {
    width: 102px;
    height: 32px;
}

.sms .note {
    padding: 5px 2px 0;
}

.footer {
    display: flex;
    align-items: flex-start;
    justify-content: flex-end;
    gap: 3px;
    flex: none;
    height: 34px;
    padding: 5px 3px 0 0;
    border-top: 1px solid #bdbdbd;
    background-color: #fff;
}

.footer .btn {
    width: 74px;
    height: 20px;
}

.footer svg {
    align-self: flex-end;
    margin-bottom: 4px;
}
```

FILE: script.js
```js
const HOUR_WIDTH = 24;

// [name, checked, bars, row class], each bar is [type, start hour, end hour, text]
const orders = [
    ['11000253-3, Spirig (2), 8117 Fäl...', false, [['plan', 14.75, 16]]],
    ['11000377-7, Spirig (2), 8117 Fäl...', false, [['plan', 6.5, 7.25]]],
    ['11000377-8, Spirig (2), 8117 Fäl...', false, [['plan', 13, 17]]],
    ['11000278-20, Valerie Vitality G...', false, [['plan', 14, 17]]],
    ['11000370-1, Maja Hintermann (...', false, [['done', 7, 16]]],
    ['11000384-1, Doris Wendel (4), ...', false, [['done', 6.75, 13.25]]],
    ['11000387-1, Krabatsch (4), 661...', false, [['done', 6.5, 18]]],
    ['11000393-1, Karin Dachcom A...', false, [['day', 7, 16]]],
    ['11000413-5, El Vino (4), 8117 F...', false, [['done', 7, 17]]],
    ['11000415-1, El Vino (4), 8117 F...', true, [['plan', 7.5, 17.5]], 'selected'],
    ['11000417-5, El Vino (4), 8117 F...', false, [['plan', 7.5, 17]]],
    ['11000418-5, El Vino (4), 8117 F...', false, [['plan', 7.25, 15]]],
    ['11000419-5, El Vino (4), 8117 F...', false, [['plan', 7.25, 17]]]
];

const staff = [
    ['Sauter Marcel', true, [['done', 7, 17]], 'notified'],
    ['Schiavone Vittorio', true, [['done', 7, 16]], 'notified'],
    ['Vokshi Florian', true, [['plan', 7.25, 17]], 'notified'],
    ['Wilman Martin', false, []],
    ['Wolters Ehrhart', true, [['plan', 8.5, 12], ['overlap', 10, 10.5], ['plan', 12.75, 17], ['overlap', 14, 14.5]], 'notified'],
    ['Zbinden Peter', true, [['plan', 7.75, 15.5]], 'notified'],
    ['------- Filiale Muttenz -------', false, [['absence', 0, 24, 'DA']], 'branch'],
    ['Cavelti Josef', true, [['done', 7, 16]], 'notified'],
    ['Gantner Daniel', true, [['absence', 6.25, 6.75], ['done', 6.75, 18]], 'notified'],
    ['Muggler Heinz', false, [['absence', 7.5, 15.5, 'DA']]],
    ['Rexhepi Arlind', true, [['plan', 7.5, 17.5]], 'notified'],
    ['Sandmeier Martin', false, [['absence', 7.5, 15.5, 'DA']]],
    ['Sandmeier Tristan', true, [['done', 7, 16]], 'notified'],
    ['------- Filiale Spreitenbach -------', false, [['absence', 0, 24, 'DA']], 'branch'],
    ['Berhane Afewerki', false, [['absence', 7.25, 16, 'DA']]],
    ['Caetano Raul de Almeida', false, [['absence', 7.25, 16, 'DA']]],
    ['Carrageta Charrua Joao Pedro', false, []],
    ['De Castro Rodrigues Marco Mig...', false, []],
    ['Hereqi Denis', false, [['absence', 7, 9.5, 'DA'], ['absence', 10, 12, 'DA'], ['absence', 13.5, 17.5, 'DA']]],
    ['Killer Peter', true, [['absence', 6.5, 7.5, 'DA'], ['active', 7.5, 17.5]], 'selected'],
    ['Lani Armend', false, [['absence', 6.75, 8.25, 'DA'], ['absence', 8.25, 14.5, 'DA']]]
];

function renderBar([type, start, end, text]) {
    const left = start * HOUR_WIDTH;
    const width = (end - start) * HOUR_WIDTH + 1;
    return `<div class="bar bar-${type}" style="left: ${left}px; width: ${width}px">${text || ''}</div>`;
}

function renderRows(id, rows) {
    document.getElementById(id).innerHTML = rows.map(([name, checked, bars, cls]) => `
        <tr class="${cls || ''}">
            <td>${cls === 'selected' ? '<svg class="marker" width="6" height="10"><use href="#marker" /></svg>' : ''}${name}</td>
            <td><input type="checkbox" aria-label="${name}" ${checked ? 'checked' : ''}></td>
            <td class="timeline">${bars.map(renderBar).join('')}</td>
        </tr>`).join('');
}

function renderScale(cell) {
    let hours = '';
    for (let h = 1; h <= 20; h++) {
        hours += `<span>${h}</span>`;
    }
    cell.innerHTML = `
        <div class="day">
            <div class="day-date">07.12.2016</div>
            <div class="hours">${hours}</div>
            <div class="ticks"></div>
        </div>
        <div class="zoom-buttons">
            <button type="button" aria-label="Vergrössern"><svg width="9" height="9"><path d="M2 4.5h5M4.500 2v5" stroke="#1d355e" /></svg></button>
            <button type="button" aria-label="Verkleinern"><svg width="9" height="9"><path d="M2 4.5h5" stroke="#1d355e" /></svg></button>
        </div>`;
}

document.querySelectorAll('.scale').forEach(renderScale);
renderRows('orderRows', orders);
renderRows('staffRows', staff);
```
